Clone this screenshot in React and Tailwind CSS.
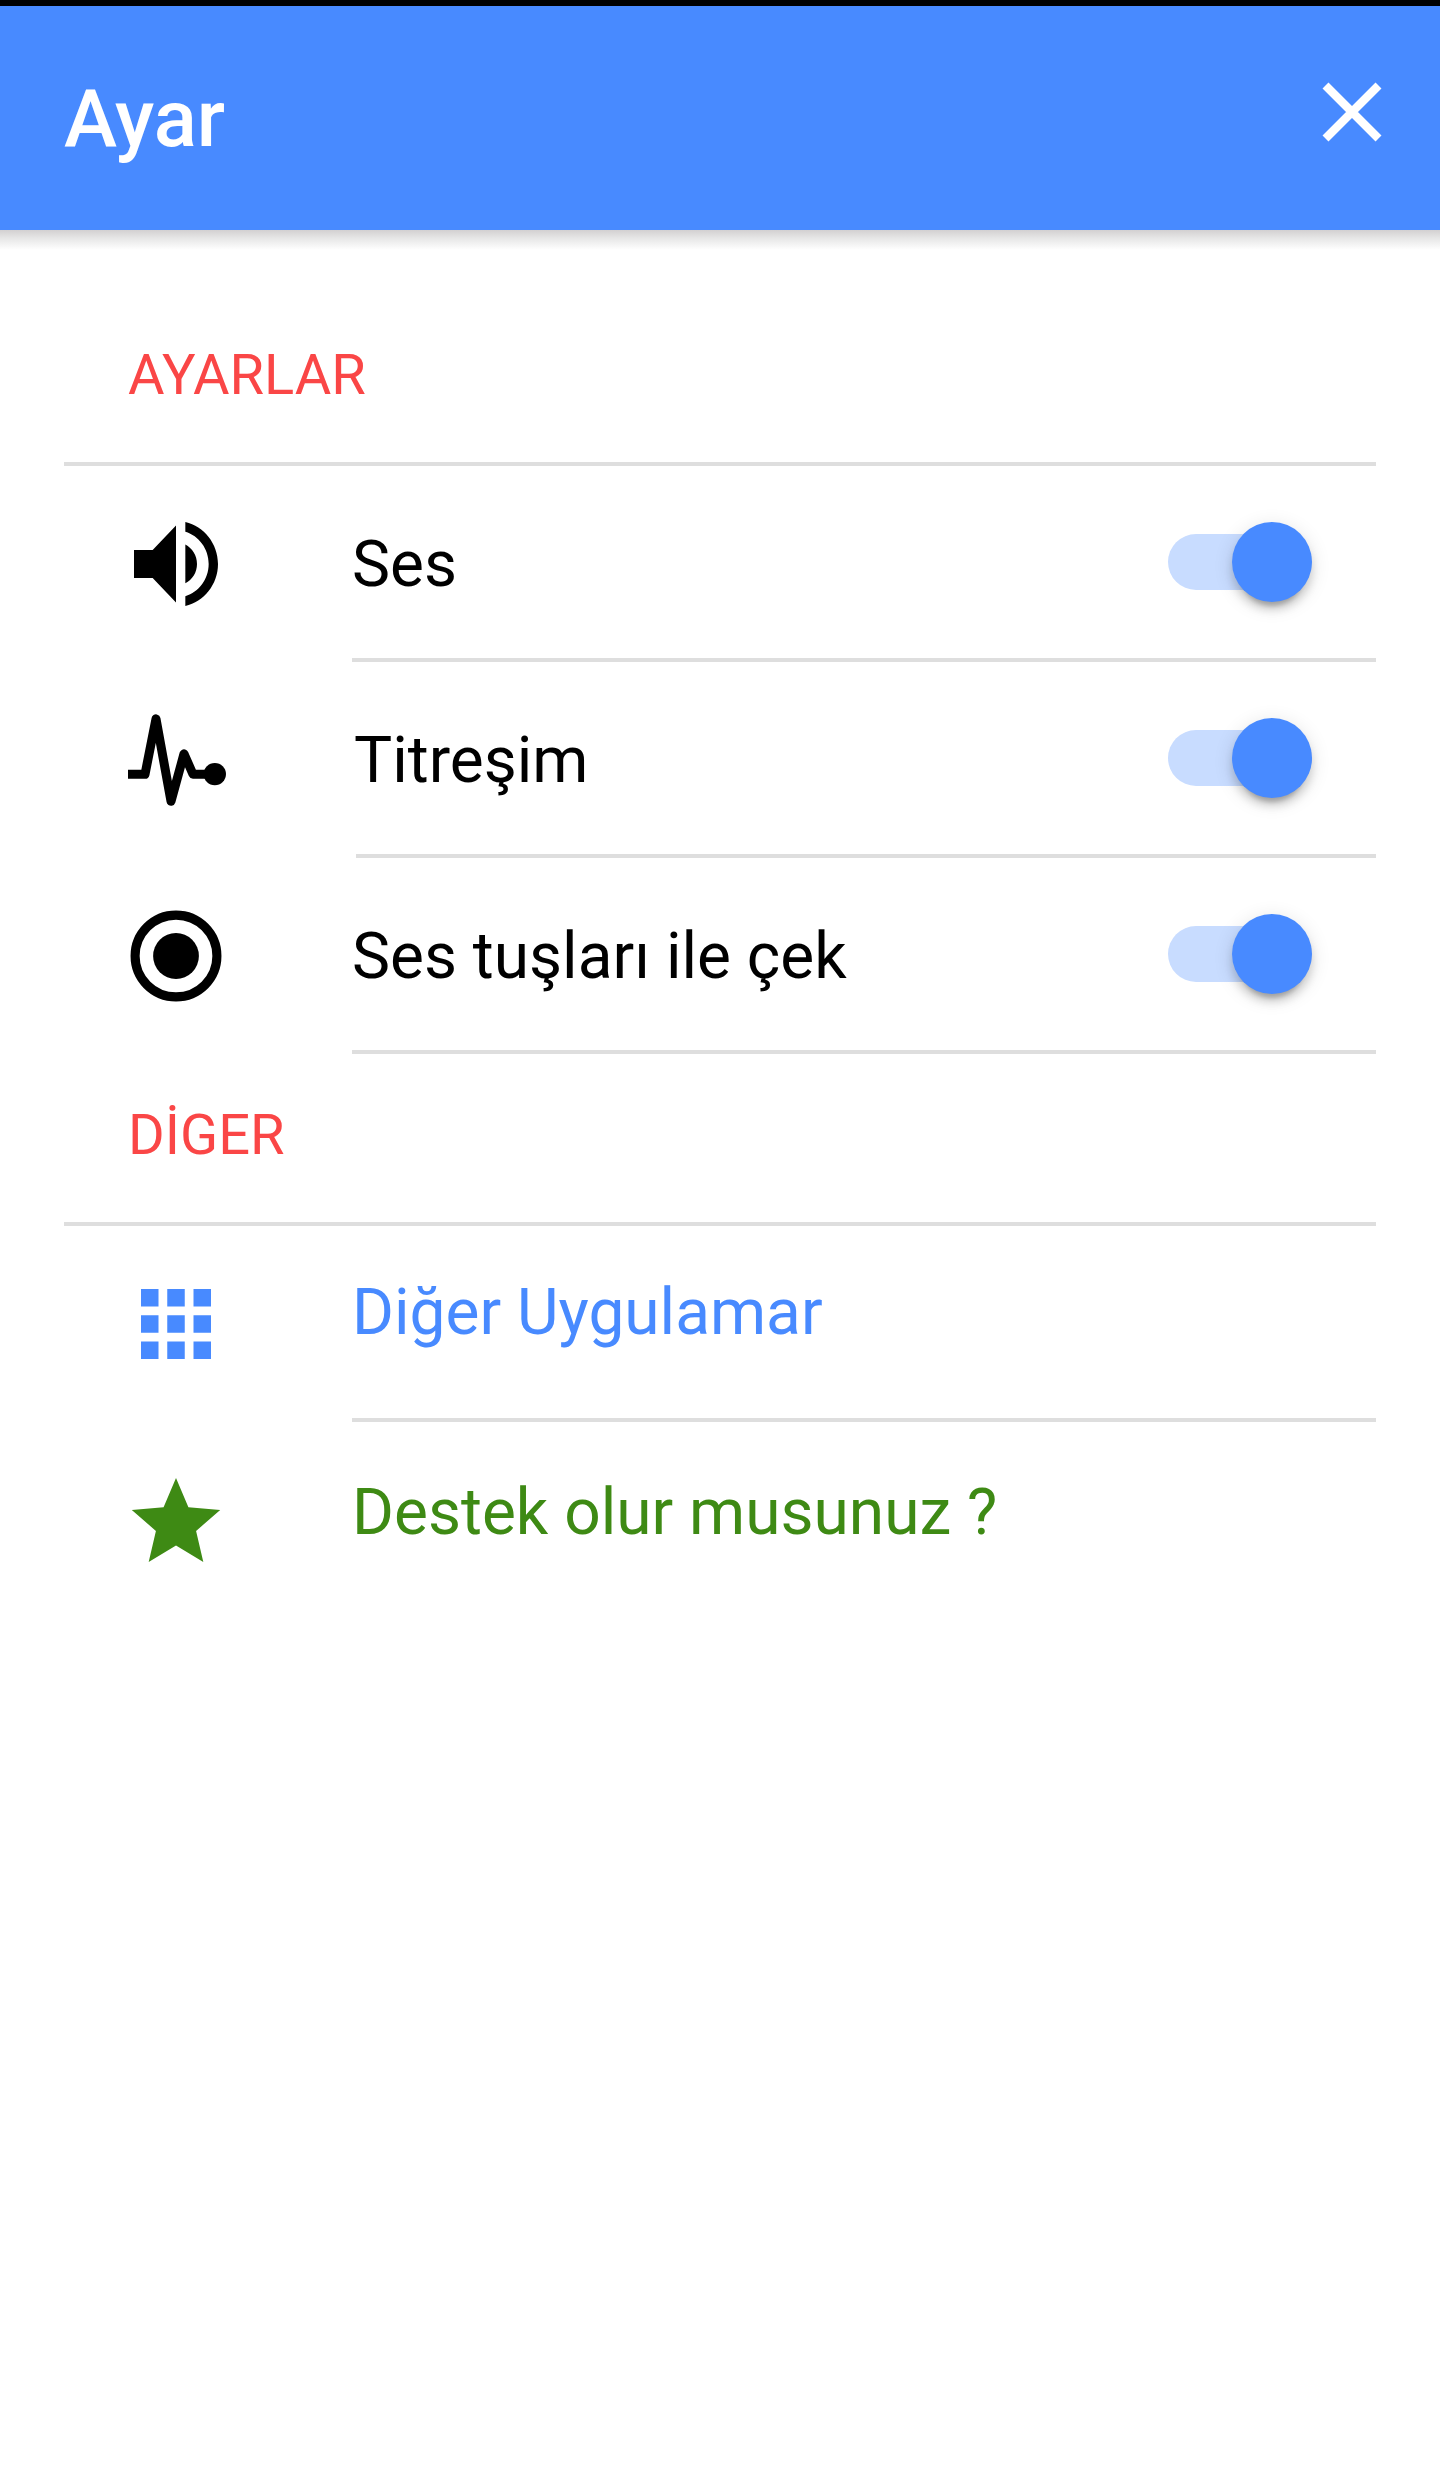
import { useState } from "react"

function VolumeIcon() {
    return (
        <svg viewBox="0 0 512 512" className="w-28 h-28" fill="currentColor">
            <path d="M64 192v128h85.334L256 431.543V80.458L149.334 192H64zm288 64c0-38.399-21.333-72.407-53.333-88.863v176.636C330.667 328.408 352 294.4 352 256zM298.667 64v44.978C360.531 127.632 405.334 186.882 405.334 256c0 69.119-44.803 128.369-106.667 147.022V448C384 428.254 448 349.257 448 256c0-93.256-64-172.254-149.333-192z" />
        </svg>
    )
}

function PulseIcon() {
    return (
        <svg viewBox="0 0 112 112" className="w-28 h-28" fill="none" stroke="currentColor" strokeWidth="9" strokeLinejoin="round">
            <path d="M8 70.3H25L36 14.8L51 97.3L64 49.8L73 70.3H95" />
            <circle cx="94.8" cy="70.1" r="11.2" fill="currentColor" stroke="none" />
        </svg>
    )
}

function RadioIcon() {
    return (
        <svg viewBox="0 0 112 112" className="w-28 h-28" fill="none" stroke="currentColor">
            <circle cx="56" cy="56" r="40.9" strokeWidth="9.1" />
            <circle cx="56" cy="56" r="22.9" fill="currentColor" stroke="none" />
        </svg>
    )
}

function AppsIcon() {
    return (
        <svg viewBox="0 0 512 512" className="w-28 h-28" fill="currentColor">
            <path d="M96 176h80V96H96v80zm120 240h80v-80h-80v80zm-120 0h80v-80H96v80zm0-120h80v-80H96v80zm120 0h80v-80h-80v80zM336 96v80h80V96h-80zm-120 80h80V96h-80v80zm120 120h80v-80h-80v80zm0 120h80v-80h-80v80z" />
        </svg>
    )
}

function StarIcon() {
    return (
        <svg viewBox="0 0 512 512" className="w-28 h-28" fill="currentColor">
            <path d="M256 372.686L380.83 448l-33.021-142.066L458 210.409l-145.267-12.475L256 64l-56.743 133.934L54 210.409l110.192 95.525L131.161 448z" />
        </svg>
    )
}

function CloseIcon() {
    return (
        <svg viewBox="0 0 60 60" className="w-[60px] h-[60px]" fill="none" stroke="currentColor" strokeWidth="8.4">
            <path d="M3.5 3.5L56.5 56.5M56.5 3.5L3.5 56.5" />
        </svg>
    )
}

function Toggle({ on, onClick }) {
    return (
        <button type="button" role="switch" aria-checked={on} onClick={onClick} className="mt-14 mr-16 flex h-20 w-36 items-center">
            <span className={`flex h-14 w-36 items-center rounded-full ${on ? "justify-end bg-[#c8dcff]" : "justify-start bg-[#dedede]"}`}>
                <span className={`size-20 shrink-0 rounded-full shadow-[0_8px_8px_rgba(0,0,0,0.14),0_12px_4px_-8px_rgba(0,0,0,0.2),0_4px_20px_rgba(0,0,0,0.12)] ${on ? "bg-[#488aff]" : "bg-white"}`}></span>
            </span>
        </button>
    )
}

function ListHeader({ title, className }) {
    return (
        <h2 className={`ml-16 mr-16 flex items-end border-b-4 border-[#dedede] pl-16 pb-[55px] text-[56px] leading-16 text-[#fa4646] ${className}`}>{title}</h2>
    )
}

export default function App() {
    const [enabled, setEnabled] = useState({ sound: true, vibration: true, volumeKeys: true })

    const settings = [
        { id: "sound", label: "Ses", icon: VolumeIcon, body: "ml-[120px]", text: "" },
        { id: "vibration", label: "Titreşim", icon: PulseIcon, body: "ml-[124px]", text: "-ml-0.5" },
        { id: "volumeKeys", label: "Ses tuşları ile çek", icon: RadioIcon, body: "ml-[120px]", text: "" },
    ]

    const links = [
        { label: "Diğer Uygulamar", icon: AppsIcon, color: "text-[#488aff]", body: "border-b-4 pt-[47px]" },
        { label: "Destek olur musunuz ?", icon: StarIcon, color: "text-[#3e8a14]", body: "pt-[51px]" },
    ]

    return (
        <div className="min-h-[2470px] w-full bg-white font-[Roboto,sans-serif] text-black">
            <header className="flex h-[230px] items-start justify-between border-t-[6px] border-black bg-[#488aff] pl-16 pr-[58px] text-white">
                <h1 className="mt-[65px] text-[80px] leading-24 font-medium">Ayar</h1>
                <button type="button" className="mt-[76px]"><CloseIcon /></button>
            </header>
            <div className="h-5 bg-linear-to-b from-[#d2d0d1] via-[#e6e6e6] via-40% to-white"></div>

            <main>
                <ListHeader title="AYARLAR" className="h-[216px]" />
                {settings.map(s => (
                    <div key={s.id} className="flex h-[196px] items-start pl-[120px] pr-16">
                        <div className="mt-[42px] shrink-0"><s.icon /></div>
                        <div className={`flex h-full grow items-start justify-between border-b-4 border-[#dedede] ${s.body}`}>
                            <span className={`mt-[59px] text-[64px] leading-20 ${s.text}`}>{s.label}</span>
                            <Toggle on={enabled[s.id]} onClick={() => setEnabled({ ...enabled, [s.id]: !enabled[s.id] })} />
                        </div>
                    </div>
                ))}

                <ListHeader title="DİGER" className="h-[172px]" />
                {links.map(l => (
                    <div key={l.label} className={`flex h-[196px] items-start pl-[120px] pr-16 ${l.color}`}>
                        <div className="mt-[42px] shrink-0"><l.icon /></div>
                        <div className={`ml-[120px] h-full grow border-[#dedede] text-[64px] leading-20 ${l.body}`}>{l.label}</div>
                    </div>
                ))}
            </main>
        </div>
    )
}
